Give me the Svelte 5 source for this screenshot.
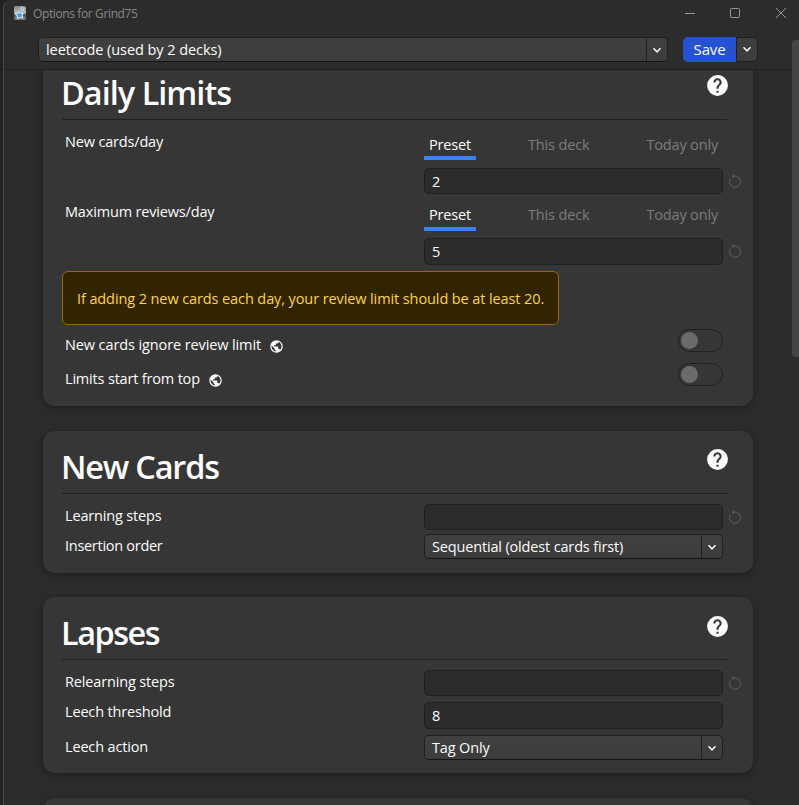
<script>
  const tabs = ['Preset', 'This deck', 'Today only'];
</script>

{#snippet chevron()}
  <svg class="chev" width="10" height="7" viewBox="0 0 10 7"><path d="M1.5 1.3 5 4.8 8.5 1.3" fill="none" stroke="#f4f4f4" stroke-width="1.6" /></svg>
{/snippet}

{#snippet heading(text, cls)}
  <div class="head">
    <h1 class={cls}>{text}</h1>
    <svg class="help" width="25" height="25" viewBox="0 0 24 24"><path fill="#fcfcfc" d="M15.07 11.25l-.9.92C13.45 12.89 13 13.5 13 15h-2v-.5c0-1.11.45-2.11 1.17-2.83l1.24-1.26c.37-.36.59-.86.59-1.41a2 2 0 0 0-2-2 2 2 0 0 0-2 2H8a4 4 0 0 1 4-4 4 4 0 0 1 4 4 3.2 3.2 0 0 1-.93 2.25M13 19h-2v-2h2M12 2A10 10 0 0 0 2 12a10 10 0 0 0 10 10 10 10 0 0 0 10-10c0-5.53-4.5-10-10-10z" /></svg>
  </div>
{/snippet}

{#snippet field(value, reset, h)}
  <div class="field">
    <div class="input" style:height="{h}px">{value}</div>
    {#if reset}
      <svg class="reset" width="16" height="16" viewBox="0 0 16 16"><path d="M6.500 3.300A5.500 5.500 0 1 1 3.400 5.600" fill="none" stroke="#565656" stroke-width="1.100" /><path d="M4.300 3.100 7.400 1v4.600z" fill="#565656" /></svg>
    {/if}
  </div>
{/snippet}

{#snippet select(text)}
  <div class="select">
    <span>{text}</span>
    <i>{@render chevron()}</i>
  </div>
{/snippet}

{#snippet tabbar()}
  <div class="tabs">
    {#each tabs as tab, i}
      <div class="tab" class:active={i === 0}>{tab}</div>
    {/each}
  </div>
{/snippet}

{#snippet globe()}
  <svg class="globe" width="15" height="15" viewBox="0 0 24 24"><path fill="#fcfcfc" d="M17.900 17.390c-.26-.8-1.010-1.390-1.900-1.390h-1v-3a1 1 0 0 0-1-1H8v-2h2a1 1 0 0 0 1-1V7h2a2 2 0 0 0 2-2v-.41a7.984 7.984 0 0 1 2.900 12.800M11 19.930c-3.950-.49-7-3.850-7-7.930 0-.62.080-1.220.21-1.790L9 15v1a2 2 0 0 0 2 2m1-16A10 10 0 0 0 2 12a10 10 0 0 0 10 10 10 10 0 0 0 10-10A10 10 0 0 0 12 2z" /></svg>
{/snippet}

<div class="screen">
  <div class="window">
    <header class="titlebar">
      <svg width="12" height="14" viewBox="0 0 12 14">
        <defs><linearGradient id="ic" x1="0" y1="0" x2="0" y2="1"><stop offset="0" stop-color="#8a8a8a" /><stop offset=".5" stop-color="#bbb" /><stop offset=".6" stop-color="#555" /><stop offset="1" stop-color="#777" /></linearGradient></defs>
        <rect width="12" height="14" rx="1.500" fill="url(#ic)" />
        <path d="M5 5.500 6.600 7.300 9.100 7.300 8.200 9.500 9 12.200 6 11.500 3.200 12.700 3.200 10 1.200 8 4 7.500z" fill="#42a3e8" stroke="#e7f3fb" stroke-width="1" />
        <path d="M8.300 0.800 9.100 2 10.600 2.200 9.500 3.400 9.700 4.800 8.300 4.200 7 4.700 7.200 3.200 6.200 2.200 7.600 2z" fill="#7cc0ee" stroke="#e7f3fb" stroke-width=".6" />
      </svg>
      <span class="title">Options for Grind75</span>
      <svg class="winbtns" width="104" height="14" viewBox="0 0 104 14" fill="none" stroke="#979797">
        <path d="M0 7.500h10" /><rect x="45.500" y="2.500" width="9" height="9" rx="1" /><path d="M91 2l10 10M101 2l-10 10" />
      </svg>
    </header>
    <div class="toolbar">
      <div class="select wide"><span>leetcode (used by 2 decks)</span><i>{@render chevron()}</i></div>
      <div class="save">Save</div>
      <div class="more">{@render chevron()}</div>
    </div>
    <main>
      <div class="cards">
        <section class="card limits">
          {@render heading('Daily Limits', 'h-daily')}
          <div class="row daily">
            <span class="label">New cards/day</span>
            <div>{@render tabbar()}{@render field('2', true, 26)}</div>
          </div>
          <div class="row daily second">
            <span class="label">Maximum reviews/day</span>
            <div>{@render tabbar()}{@render field('5', true, 27)}</div>
          </div>
          <div class="warning">If adding 2 new cards each day, your review limit should be at least 20.</div>
          <div class="switchrow"><span>New cards ignore review limit</span>{@render globe()}<div class="switch"><b></b></div></div>
          <div class="switchrow"><span class="top">Limits start from top</span>{@render globe()}<div class="switch"><b></b></div></div>
        </section>
        <section class="card new">
          {@render heading('New Cards', 'h-new')}
          <div class="row" style:height="30px"><span class="label">Learning steps</span>{@render field('', true, 26)}</div>
          <div class="row" style:height="25px"><span class="label tight">Insertion order</span>{@render select('Sequential (oldest cards first)')}</div>
        </section>
        <section class="card lapses">
          {@render heading('Lapses', 'h-lapses')}
          <div class="row" style:height="32px"><span class="label">Relearning steps</span>{@render field('', true, 26)}</div>
          <div class="row" style:height="33px"><span class="label up">Leech threshold</span>{@render field('8', false, 27)}</div>
          <div class="row" style:height="25px"><span class="label">Leech action</span>{@render select('Tag Only')}</div>
        </section>
        <section class="card next"></section>
      </div>
    </main>
    <div class="scroll"></div>
  </div>
</div>

<style>
  :global(body) { background: #222; }
  * { box-sizing: border-box; }
  .screen {
    width: 799px; height: 805px; overflow: hidden; padding-left: 3px; background: #222;
    font-family: "Open Sans", "Noto Sans", sans-serif; font-size: 14.500px; letter-spacing: -0.16px; color: #fcfcfc;
  }
  .window {
    position: relative; height: 805px; background: #2c2c2c; border-left: 1px solid #464646; border-top-left-radius: 8px;
    display: flex; flex-direction: column; overflow: hidden;
  }
  .titlebar { height: 28px; flex: none; display: flex; align-items: center; padding: 0 9px 0 10px; }
  .titlebar > svg:first-child { margin-top: -2px; }
  .title { margin-left: 7px; margin-top: -1px; font-size: 12px; color: #898989; letter-spacing: -0.38px; }
  .winbtns { margin: -2px 1px 0 auto; }
  .toolbar { height: 42px; flex: none; display: flex; align-items: flex-start; padding: 9px 0 0 35px; border-bottom: 1px solid #202020; }
  .select {
    width: 299px; height: 25px; display: flex; border: 1px solid #202020; border-bottom-color: #141414;
    border-radius: 5px; background: linear-gradient(#404040, #3c3c3c); line-height: 23px;
  }
  .select span { flex: 1; padding-left: 7px; white-space: nowrap; }
  .select i { width: 21px; border-left: 1px solid #202020; display: flex; align-items: center; justify-content: center; padding-top: 2px; }
  .chev { display: block; }
  .wide { width: 630px; margin-left: -1px; letter-spacing: -0.06px; }
  .save { width: 53px; height: 25px; margin-left: 15px; background: #2552d0; border-radius: 5px 0 0 5px; text-align: center; line-height: 24px; font-size: 15px; }
  .more { width: 22px; height: 25px; background: #3d3d3d; border: 1px solid #202020; border-radius: 0 5px 5px 0; display: flex; align-items: center; justify-content: center; }
  main { flex: 1; min-height: 0; display: flex; overflow: hidden; }
  .cards { width: 710px; margin-left: 39px; flex: none; margin-top: -13px; }
  .card { background: #363636; border-radius: 12px; padding: 0 26px 0 19px; box-shadow: 0 2px 9px rgba(0, 0, 0, .34); }
  .limits { height: 349px; }
  .new { height: 142px; margin-top: 25px; }
  .lapses { height: 176px; margin-top: 24px; }
  .next { height: 80px; margin-top: 25px; }
  .head { height: 63px; border-bottom: 1px solid #202020; display: flex; justify-content: space-between; margin-bottom: 10px; }
  h1 { margin: 0 0 0 -1px; font-size: 32.500px; font-weight: 600; line-height: 72px; white-space: nowrap; }
  .h-daily { letter-spacing: -1px; }
  .h-new { letter-spacing: -1.2px; }
  .h-lapses { letter-spacing: -1.500px; }
  .help { margin: 16px -3px 0 0; flex: none; }
  .lapses .help { margin-top: 17px; }
  .row { display: grid; grid-template-columns: 362px 1fr; align-items: start; }
  .label { padding-left: 3px; line-height: 24px; }
  .label.up { margin-top: -2px; }
  .label.tight { letter-spacing: -0.28px; }
  .daily { height: 70px; margin-top: -2px; }
  .daily .label { margin-top: 2px; letter-spacing: -0.17px; }
  .second { margin-top: 0; }
  .tabs { display: flex; justify-content: space-between; width: 299px; height: 32px; margin-bottom: 8px; }
  .tab { height: 32px; padding: 0 5px; color: #7c7c7c; line-height: 33px; white-space: nowrap; }
  .tab.active { width: 52px; color: #fcfcfc; border-bottom: 4px solid #3b82f6; }
  .second .tab.active { height: 33px; }
  .field { display: flex; align-items: center; width: 330px; }
  .input { width: 299px; flex: none; border: 1px solid #202020; border-radius: 5px; background: #2c2c2c; padding-left: 7px; line-height: 26px; }
  .reset { margin: -1px 0 0 4px; flex: none; }
  .warning { width: 497px; height: 54px; margin-top: 3px; border: 1px solid #9a6a00; border-radius: 6px; background: #332400; color: #fcd34d; padding-left: 14px; line-height: 54px; letter-spacing: -0.1px; white-space: nowrap; }
  .switchrow { height: 34px; display: flex; align-items: flex-start; padding: 7px 4px 0 3px; line-height: 26px; letter-spacing: -0.11px; }
  .switchrow .top { letter-spacing: -0.18px; }
  .globe { margin: 7px 0 0 8px; }
  .switch { width: 45px; height: 23px; margin: -3px 0 0 auto; border: 1px solid #202020; border-radius: 12px; padding: 2px; }
  .switch b { display: block; width: 17px; height: 17px; border-radius: 50%; background: #6b6b6b; }
  .scroll { position: absolute; right: 0; top: 40px; width: 7px; height: 317px; border-radius: 4px 0 0 4px; background: #454545; }
</style>
